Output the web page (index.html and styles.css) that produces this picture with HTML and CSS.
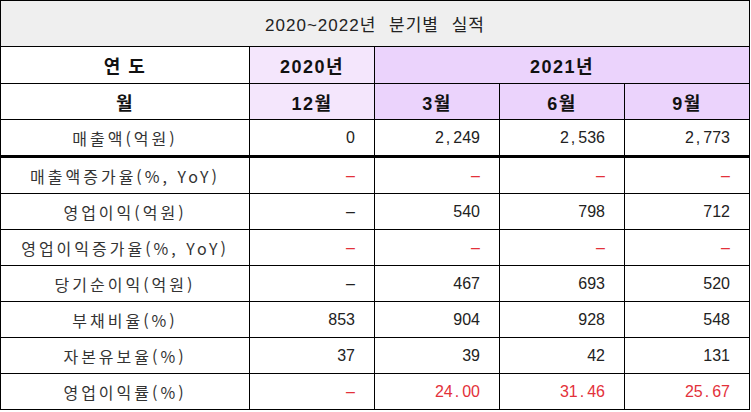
FILE: index.html
```html
<!DOCTYPE html>
<html lang="ko">
<head>
<meta charset="utf-8">
<title>2020~2022년 분기별 실적</title>
<link rel="stylesheet" href="styles.css">
</head>
<body>
<table class="perf">
  <colgroup>
    <col class="c-label">
    <col class="c-val">
    <col class="c-val">
    <col class="c-val">
    <col class="c-val">
  </colgroup>
  <tr class="r-title"><td colspan="5" class="title">2020~2022년 분기별 실적</td></tr>
  <tr class="r-head1">
    <th class="lab-h">연 도</th>
    <th class="y2020">2020년</th>
    <th class="y2021" colspan="3">2021년</th>
  </tr>
  <tr class="r-head2">
    <th class="lab-h">월</th>
    <th class="y2020">12월</th>
    <th class="y2021">3월</th>
    <th class="y2021">6월</th>
    <th class="y2021">9월</th>
  </tr>
  <tr class="r-first">
    <td class="lab">매출액(억원)</td>
    <td class="num">0</td><td class="num">2<span class="sep">,</span>249</td><td class="num">2<span class="sep">,</span>536</td><td class="num">2<span class="sep">,</span>773</td>
  </tr>
  <tr>
    <td class="lab">매출액증가율(%, YoY)</td>
    <td class="num red">–</td><td class="num red">–</td><td class="num red">–</td><td class="num red">–</td>
  </tr>
  <tr>
    <td class="lab">영업이익(억원)</td>
    <td class="num">–</td><td class="num">540</td><td class="num">798</td><td class="num">712</td>
  </tr>
  <tr>
    <td class="lab">영업이익증가율(%, YoY)</td>
    <td class="num red">–</td><td class="num red">–</td><td class="num red">–</td><td class="num red">–</td>
  </tr>
  <tr>
    <td class="lab">당기순이익(억원)</td>
    <td class="num">–</td><td class="num">467</td><td class="num">693</td><td class="num">520</td>
  </tr>
  <tr>
    <td class="lab">부채비율(%)</td>
    <td class="num">853</td><td class="num">904</td><td class="num">928</td><td class="num">548</td>
  </tr>
  <tr>
    <td class="lab">자본유보율(%)</td>
    <td class="num">37</td><td class="num">39</td><td class="num">42</td><td class="num">131</td>
  </tr>
  <tr>
    <td class="lab">영업이익률(%)</td>
    <td class="num red">–</td><td class="num red">24<span class="sep">.</span>00</td><td class="num red">31<span class="sep">.</span>46</td><td class="num red">25<span class="sep">.</span>67</td>
  </tr>
</table>
</body>
</html>
```

FILE: styles.css
```css
html, body {
  margin: 0;
  padding: 0;
  background: #ffffff;
}

.perf {
  border-collapse: collapse;
  table-layout: fixed;
  width: 750px;
  font-family: "Liberation Sans", "Noto Sans CJK KR", sans-serif;
  color: #222222;
}

.c-label { width: 249px; }
.c-val { width: 125px; }

.perf td,
.perf th {
  border: 1px solid #000000;
  padding: 0;
  height: 35px;
  font-size: 16px;
}

.r-title td { height: 45px; }
.r-head1 th { height: 36px; }

.title {
  background: #efefef;
  text-align: center;
  font-weight: normal;
  color: #222222;
  font-size: 17px !important;
  letter-spacing: 1px;
  word-spacing: 7px;
}

.perf th {
  font-weight: bold;
  color: #111111;
  text-align: center;
  font-size: 18px;
  letter-spacing: 1.5px;
}

.lab-h { background: #ffffff; }
.y2020 { background: #f4e6fc; }
.y2021 { background: #ebd3fc; }

.r-first td { border-bottom: 3px solid #000000; }

.lab {
  text-align: center;
  font-family: "Noto Sans CJK KR", sans-serif;
  letter-spacing: 3px;
  color: #333333;
  font-size: 16px;
}

.num {
  text-align: right;
  padding-right: 19px !important;
  color: #222222;
}

.sep {
  padding: 0 3px 0 2px;
}

.red { color: #e3313a; }
```
